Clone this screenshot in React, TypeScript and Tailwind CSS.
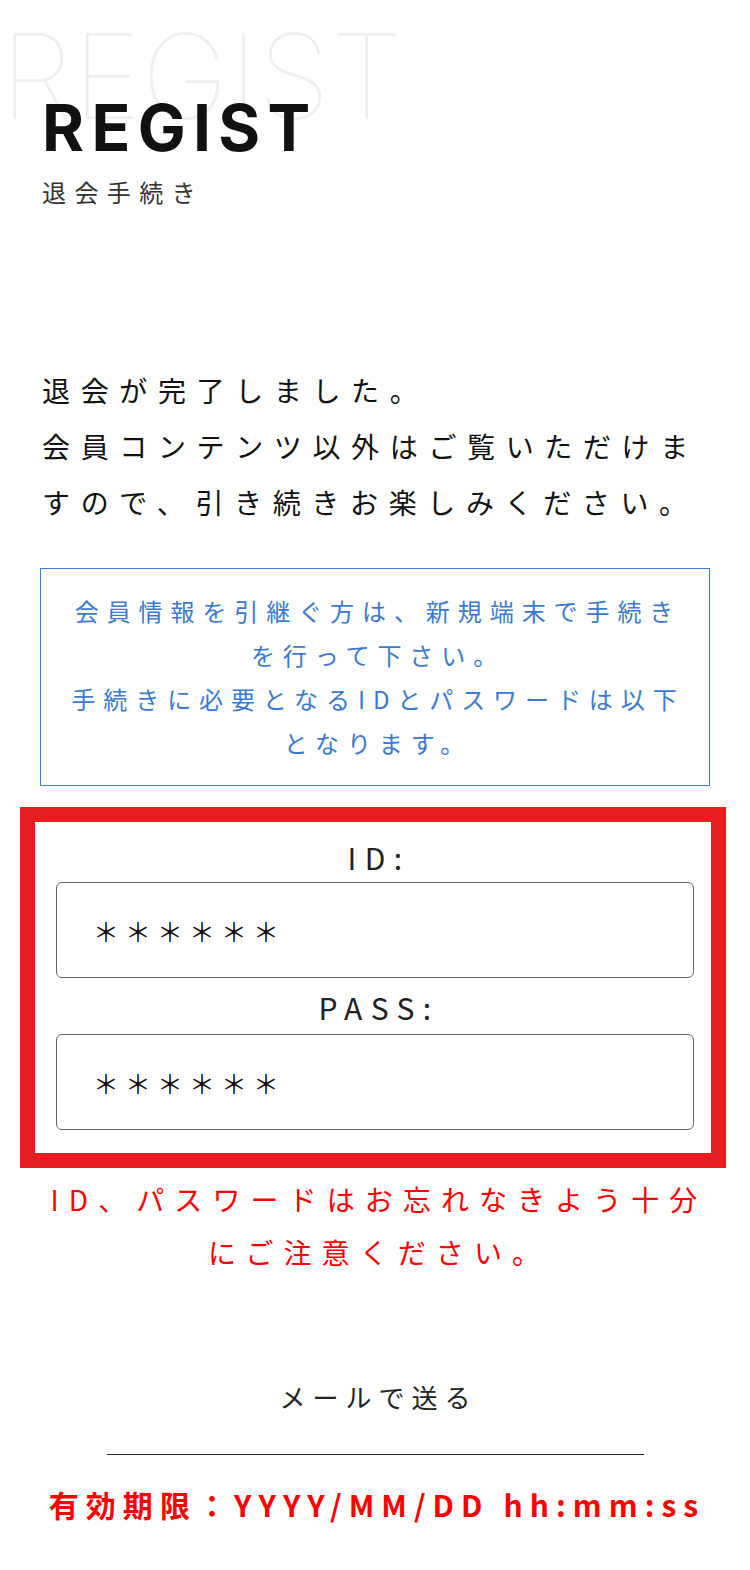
import React from "react";

export default function App() {
  return (
    <div className="relative w-[750px] min-h-[1570px] overflow-hidden bg-white font-['Noto_Sans_CJK_JP','Noto_Sans',sans-serif] text-[#111]">
      <div className="pointer-events-none absolute left-0 top-[17px] select-none font-['Inter',sans-serif] text-[118px] font-thin leading-none text-[#efefef]">
        REGIST
      </div>

      <header className="relative pl-[42px] pt-[96px]">
        <h1 className="font-['Inter',sans-serif] text-[64px] font-bold leading-none tracking-[0.115em] text-[#111]">
          REGIST
        </h1>
        <p className="mt-[14px] text-[24px] leading-[36px] tracking-[0.35em] text-[#333]">
          退会手続き
        </p>
      </header>

      <main className="pb-[48px]">
        <p className="mt-[152px] px-[42px] text-[28px] leading-[56px] tracking-[0.38em] text-[#111]">
          退会が完了しました。
          <br />
          会員コンテンツ以外はご覧いただけま
          <br />
          すので、引き続きお楽しみください。
        </p>

        <div className="mx-[40px] mt-[38px] border border-[#3b7dd8] py-[20px] text-center text-[24px] leading-[44px] tracking-[0.33em] text-[#3a7ad0]">
          <p className="pl-[6px]">
            会員情報を引継ぐ方は、新規端末で手続き
            <br />
            を行って下さい。
            <br />
            手続きに必要となるIDとパスワードは以下
            <br />
            となります。
          </p>
        </div>

        <div className="ml-[20px] mr-[24px] mt-[21px] border-[15px] border-[#e41e20] pb-[23px] pl-[21px] pr-[17px] pt-[13px]">
          <div className="pl-[8px] text-center text-[30px] leading-[44px] tracking-[0.28em] text-[#222]">
            ID:
          </div>
          <div className="mt-[3px] flex h-[96px] items-center rounded-[6px] border border-[#666] pl-[36px] text-[26px] tracking-[6px] text-[#111]">
            ＊＊＊＊＊＊
          </div>
          <div className="mt-[7px] pl-[8px] text-center text-[30px] leading-[44px] tracking-[0.28em] text-[#222]">
            PASS:
          </div>
          <div className="mt-[5px] flex h-[96px] items-center rounded-[6px] border border-[#666] pl-[36px] text-[26px] tracking-[6px] text-[#111]">
            ＊＊＊＊＊＊
          </div>
        </div>

        <p className="mt-[5px] pl-[8px] text-center text-[28px] leading-[53px] tracking-[0.36em] text-[#ff0000]">
          ID、パスワードはお忘れなきよう十分
          <br />
          にご注意ください。
        </p>

        <p className="mt-[98px] pl-[7px] text-center text-[26px] leading-[40px] tracking-[0.27em] text-[#222]">
          メールで送る
        </p>

        <div className="mx-auto mt-[37px] h-[1px] w-[537px] bg-[#222]" />

        <p className="mt-[29px] pl-[4px] text-center text-[30px] font-bold leading-[40px] tracking-[0.235em] text-[#ff0000]">
          有効期限：YYYY/MM/DD hh:mm:ss
        </p>
      </main>
    </div>
  );
}
